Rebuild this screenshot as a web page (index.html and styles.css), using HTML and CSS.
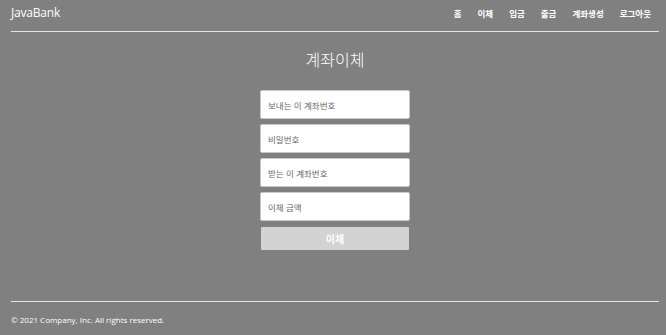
FILE: index.html
```html
<!DOCTYPE html>
<html lang="ko">
<head>
<meta charset="utf-8">
<title>JavaBank</title>
<link rel="stylesheet" href="styles.css">
</head>
<body>
<div class="page">
  <header class="header">
    <a class="brand" href="#">JavaBank</a>
    <nav class="nav">
      <a href="#">홈</a>
      <a href="#">이체</a>
      <a href="#">입금</a>
      <a href="#">출금</a>
      <a href="#">계좌생성</a>
      <a href="#">로그아웃</a>
    </nav>
  </header>
  <main class="main">
    <h1 class="title">계좌이체</h1>
    <form class="form">
      <input class="field" type="text" placeholder="보내는 이 계좌번호">
      <input class="field" type="password" placeholder="비밀번호">
      <input class="field" type="text" placeholder="받는 이 계좌번호">
      <input class="field" type="text" placeholder="이체 금액">
      <button class="submit" type="button">이체</button>
    </form>
  </main>
  <footer class="footer">
    <p>© 2021 Company, Inc. All rights reserved.</p>
  </footer>
</div>
</body>
</html>
```
FILE: styles.css
```css
html, body {
  margin: 0;
  padding: 0;
  background: #808080;
}
body {
  font-family: "Noto Sans", "Noto Sans CJK KR", sans-serif;
  color: #fff;
}
.page {
  width: 666px;
  height: 335px;
  padding: 0 7px 0 11px;
  box-sizing: border-box;
  display: flex;
  flex-direction: column;
}
.header {
  height: 32px;
  border-bottom: 1px solid #e6e6e6;
  display: flex;
  align-items: center;
  justify-content: space-between;
  box-sizing: border-box;
  padding-bottom: 6px;
}
.brand {
  color: #fff;
  text-decoration: none;
  font-family: "Open Sans", "Noto Sans", sans-serif;
  font-size: 12px;
  letter-spacing: -0.2px;
}
.nav {
  display: flex;
  gap: 16px;
  padding-right: 8px;
}
.nav a {
  color: #fff;
  text-decoration: none;
  font-family: "Noto Sans CJK KR", sans-serif;
  font-weight: 700;
  font-size: 8.5px;
}
.main {
  flex: 1;
  display: flex;
  flex-direction: column;
  align-items: center;
}
.title {
  margin: 16px 0 0;
  font-family: "Noto Sans CJK KR", sans-serif;
  font-weight: 300;
  font-size: 16px;
  line-height: 22px;
}
.form {
  margin-top: 20px;
  width: 150px;
  display: flex;
  flex-direction: column;
  gap: 5px;
}
.field {
  height: 29px;
  box-sizing: border-box;
  border: 1px solid #c8c8c8;
  border-radius: 2px;
  background: #fff;
  padding: 0 7px;
  font-family: "Noto Sans CJK KR", sans-serif;
  font-size: 8.5px;
  color: #333;
  outline: none;
}
.field::placeholder {
  color: #666;
}
.submit {
  margin: 1px 1px 0;
  height: 23px;
  border: none;
  border-radius: 1px;
  background: #d3d3d3;
  color: #fff;
  font-family: "Noto Sans CJK KR", sans-serif;
  font-weight: 700;
  font-size: 10px;
}
.footer {
  border-top: 1px solid #e6e6e6;
  height: 34px;
  box-sizing: border-box;
}
.footer p {
  margin: 12px 0 0;
  font-family: "Open Sans", "Noto Sans", sans-serif;
  font-size: 8px;
  line-height: 11px;
}
```
